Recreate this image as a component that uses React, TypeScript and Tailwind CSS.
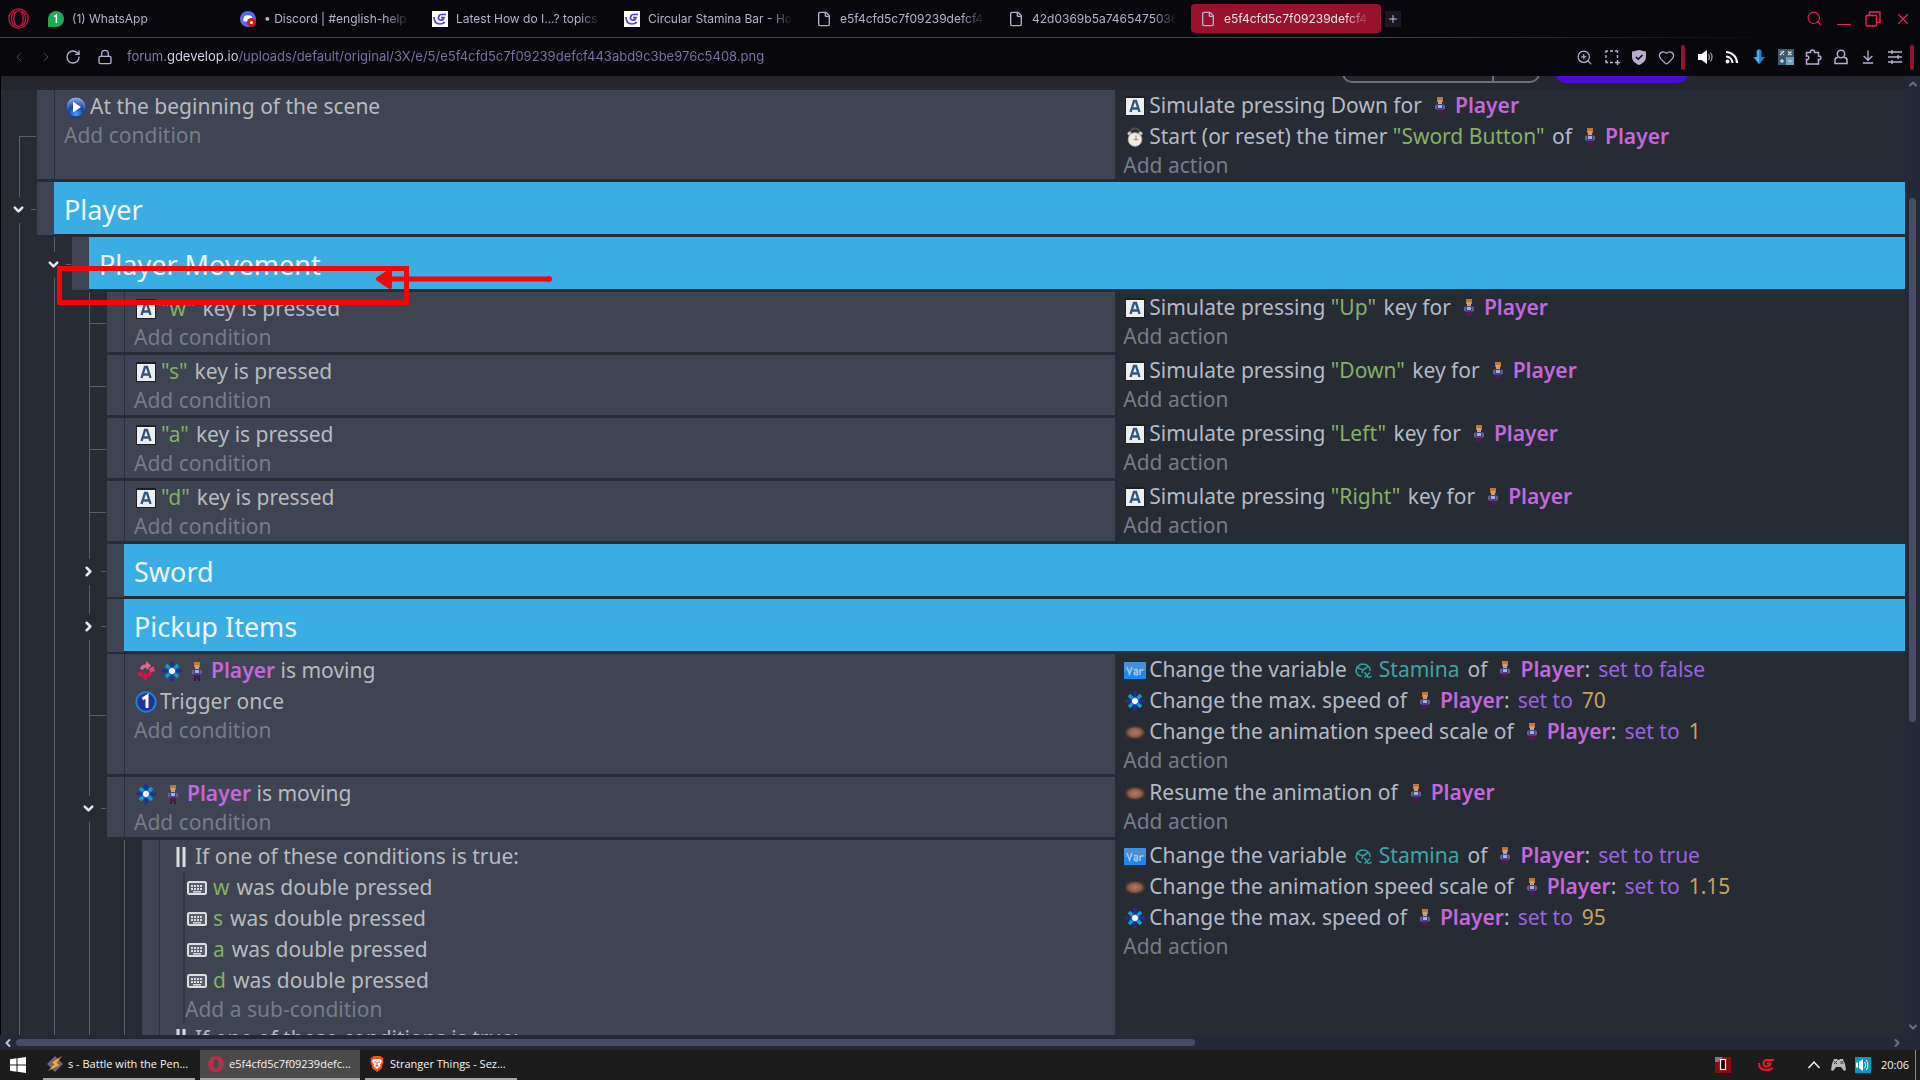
import type { ReactNode } from 'react';
import clsx from 'clsx';
import {
  ArrowDownToLine,
  ChevronDown,
  ChevronLeft,
  ChevronRight,
  ChevronUp,
  File,
  Heart,
  Lock,
  Plus,
  RotateCw,
  Search,
  X,
  ZoomIn,
} from 'lucide-react';

/* ---------- Icons ---------- */

function OperaIcon({ size, color }: { size: number; color: string }) {
  return (
    <svg width={size} height={size} viewBox="0 0 24 24" fill="none" stroke={color} strokeWidth="1.6">
      <circle cx="12" cy="12" r="11" />
      <ellipse cx="12" cy="12" rx="5.5" ry="9" />
      <path d="M8 3.5a11 11 0 0 0 0 17M16 3.5a11 11 0 0 1 0 17" />
    </svg>
  );
}

function WhatsAppIcon() {
  return (
    <svg width="16" height="16" viewBox="0 0 16 16">
      <path d="M0 16V8a8 8 0 1 1 8 8z" fill="#1fa855" />
      <path d="M6 5.6 8.4 4v8" fill="none" stroke="#fff" strokeWidth="1.5" />
    </svg>
  );
}

function DiscordIcon() {
  return (
    <svg width="16" height="16" viewBox="0 0 16 16">
      <circle cx="8" cy="8" r="8" fill="#5865f2" />
      <path d="M4.500 5C6 4 10 4 11.500 5c1 2 1.500 4 1 5.500H3.500C3 9 3.500 7 4.500 5z" fill="#fff" />
      <circle cx="11.500" cy="11.500" r="4.500" fill="#e01010" />
      <circle cx="11.500" cy="11.500" r="1.500" fill="#fff" />
    </svg>
  );
}

function GDevelopIcon() {
  return (
    <svg width="16" height="16" viewBox="0 0 16 16">
      <rect width="16" height="16" fill="#fff" />
      <path
        d="M14 3.500H9.500C6.500 3.500 5 8.500 8 9c2 .2 3.500-.5 4-2.500H9M2 6c0 4.500 2.500 7 6 7 2 0 3.500-.5 4.800-1.800"
        fill="none"
        stroke="#5a35e0"
        strokeWidth="1.700"
      />
    </svg>
  );
}

function FileIcon() {
  return <File size={16} strokeWidth={2} className="text-[#b9b0d0]" />;
}

function CropIcon() {
  return (
    <svg width="16" height="16" viewBox="0 0 16 16" fill="none" stroke="currentColor" strokeWidth="1.400">
      <path d="M2 4V2h2M6 2h3M11 2h2.500v2M2 6v3M2 11v2.500h2M6 13.500h3M13.500 6v3M13.500 11v5M11 13.500h5" />
    </svg>
  );
}

function ShieldIcon() {
  return (
    <svg width="16" height="16" viewBox="0 0 16 16">
      <path d="M1 2.500C4 2.500 6 1 8 1s4 1.500 7 1.500V8c0 4-3.500 6.500-7 8-3.500-1.500-7-4-7-8z" fill="#b9aed0" />
      <path d="m5 8 2.200 2.200L11.500 6" fill="none" stroke="#08070c" strokeWidth="1.600" />
    </svg>
  );
}

function SpeakerIcon() {
  return (
    <svg width="16" height="16" viewBox="0 0 16 16">
      <path d="M1 5h3.500L10 1v14l-5.500-4H1z" fill="#fff" />
      <path d="M11.500 5c1.200 2 1.200 4 0 6M13.500 3.500c2 3 2 6 0 9" fill="none" stroke="#999" strokeWidth="1.300" />
    </svg>
  );
}

function RssIcon() {
  return (
    <svg width="16" height="16" viewBox="0 0 16 16" fill="none" stroke="#fff" strokeWidth="2">
      <circle cx="3.500" cy="12.500" r="1" fill="#fff" />
      <path d="M2 7.500a6.500 6.500 0 0 1 6.500 6.500M2 3a11 11 0 0 1 11 11" />
    </svg>
  );
}

function BlueArrowIcon() {
  return (
    <svg width="16" height="16" viewBox="0 0 16 16">
      <path d="M5.500 1.500 8 0l2.500 1.500V8H14l-6 7.500L2 8h3.500z" fill="#1f7fd0" />
      <path d="M8 1v13L3.500 8.500H6.500V2z" fill="#55b4f5" />
    </svg>
  );
}

function CalculatorIcon() {
  return (
    <svg width="16" height="16" viewBox="0 0 16 16">
      <rect width="16" height="16" fill="#3d5a70" />
      <rect x="8" y="8" width="8" height="8" fill="#6fa0c0" />
      <path
        d="m2 6 4-4M2.500 2.500h1M5 5.500h1M10 2.500l3.500 3.500M13.500 2.500 10 6M2 12h4M4 10v4M10.500 12h3"
        stroke="#e8f0f8"
        strokeWidth="1.100"
      />
    </svg>
  );
}

function PuzzleIcon() {
  return (
    <svg width="17" height="16" viewBox="0 0 17 16" fill="none" stroke="currentColor" strokeWidth="1.500">
      <path d="M1.500 3.500h4c-.8-3.300 4.800-3.300 4 0h4v3.500c3.300-.8 3.300 4.300 0 3.500V15h-12v-4.500c3 .8 3-4.300 0-3.500z" />
    </svg>
  );
}

function PersonIcon() {
  return (
    <svg width="16" height="16" viewBox="0 0 16 16" fill="none" stroke="currentColor" strokeWidth="1.500">
      <circle cx="8" cy="5" r="3.700" />
      <path d="M5 8.500c-2 0-3 1-3 2.500v3.500h12V11c0-1.500-1-2.500-3-2.500" />
    </svg>
  );
}

function SlidersIcon() {
  return (
    <svg width="16" height="16" viewBox="0 0 16 16" fill="none" stroke="currentColor" strokeWidth="1.400">
      <path d="M1 3h14M1 8h14M1 13h14M5 1v4M11 6v4M5 11v4" />
    </svg>
  );
}

function RestoreIcon() {
  return (
    <svg width="16" height="16" viewBox="0 0 16 16" fill="none" stroke="currentColor" strokeWidth="1.400">
      <rect x="1" y="4.500" width="10.500" height="10.500" rx="1" />
      <path d="M4.500 4V1H15v10.500h-3" />
    </svg>
  );
}

function KeyIcon() {
  return (
    <svg width="20" height="20" viewBox="0 0 20 20">
      <rect width="20" height="20" fill="#1c2026" />
      <rect x="1" y="2" width="18" height="17" fill="#eceef0" />
      <path d="M5.500 16 9 5h2l3.500 11M7 12.500h6" fill="none" stroke="#34557a" strokeWidth="2.400" />
    </svg>
  );
}

function PlayIcon() {
  return (
    <svg width="22" height="22" viewBox="0 0 22 22">
      <defs>
        <radialGradient id="sphere" cx="0.500" cy="0.850" r="0.800">
          <stop offset="0" stopColor="#4aa0ff" />
          <stop offset="0.500" stopColor="#1440a4" />
          <stop offset="1" stopColor="#8fb0e0" />
        </radialGradient>
      </defs>
      <circle cx="11" cy="11" r="10" fill="url(#sphere)" stroke="#20407c" />
      <path d="M8 5.500 16 11l-8 5.500z" fill="#fff" />
    </svg>
  );
}

function TimerIcon() {
  return (
    <svg width="20" height="20" viewBox="0 0 20 20">
      <path d="M5.500 5.500C6 0 14 0 14.500 5.500" fill="none" stroke="#4c4c50" strokeWidth="2" />
      <circle cx="4.500" cy="6.500" r="2" fill="#c8c2bc" />
      <circle cx="15.500" cy="6.500" r="2" fill="#c8c2bc" />
      <circle cx="10" cy="12.500" r="6.800" fill="#f2ece6" stroke="#b5aca4" />
      <path d="M11 8.500v5M8.500 12.500h5" fill="none" stroke="#c08878" strokeWidth="1.200" />
    </svg>
  );
}

function TopDownIcon() {
  return (
    <svg width="20" height="20" viewBox="0 0 20 20">
      <path d="m4 4 4 4M16 4l-4 4M4 16l4-4M16 16l-4-4" stroke="#0ba0d8" strokeWidth="3.600" />
      <path d="M10 0v6M10 14v6M0 10h6M14 10h6" stroke="#1c2f9e" strokeWidth="3" />
      <circle cx="10" cy="10" r="4.300" fill="#1668c8" />
      <circle cx="10" cy="10" r="3" fill="#fff" />
    </svg>
  );
}

function InvertIcon() {
  return (
    <svg width="20" height="20" viewBox="0 0 20 20">
      <path d="M4 8C4.500 4.500 7 3 10 3.500V0l5 4.500-4.500 5V7C8.500 6.500 7.500 7.500 7 9z" fill="#f0608c" />
      <path d="M16.500 11c-.5 4-3 5.500-6 5.500V20L5 15.500l5-5V13c2 0 2.500-.5 3-2.500z" fill="#d8104c" />
      <path d="M1.500 11.500 7 10.500l-1 5-4-.5z" fill="#d8104c" />
      <path d="m13 7.500 4.500-2.500L19 10l-5 1.500z" fill="#e84070" />
    </svg>
  );
}

function OnceIcon() {
  return (
    <svg width="22" height="22" viewBox="0 0 22 22">
      <circle cx="11" cy="11" r="9.700" fill="#25309a" stroke="#1c86c8" strokeWidth="2" />
      <path d="M7.500 8 12 5v12" fill="none" stroke="#fff" strokeWidth="3" />
    </svg>
  );
}

function SpriteIcon() {
  return (
    <svg width="20" height="20" viewBox="0 0 20 20">
      <defs>
        <radialGradient id="knuckles">
          <stop offset="0" stopColor="#b37a60" />
          <stop offset="0.600" stopColor="#94604a" />
          <stop offset="1" stopColor="#3c2c28" />
        </radialGradient>
      </defs>
      <rect y="4" width="20" height="13" rx="4" fill="url(#knuckles)" />
    </svg>
  );
}

function VarIcon() {
  return (
    <svg width="22" height="18" viewBox="0 0 22 18">
      <rect y="1" width="22" height="17" rx="1" fill="#1e88f0" />
      <rect y="1" width="22" height="9" rx="1" fill="#4590d8" />
      <path
        d="m3 6 2.500 7L8 6M10 9c2-1 3.500-.5 3.500 1v3.500c-2 .5-3.500 0-3.500-1.200s1.500-1.300 3.500-1.200M16 14V8.500M16 10.500c.7-1.500 2-2 3.500-1.500"
        fill="none"
        stroke="#a0ccf6"
        strokeWidth="1.500"
      />
    </svg>
  );
}

function ObjectVariableIcon() {
  return (
    <svg width="18" height="18" viewBox="0 0 18 18" fill="none" stroke="#2f9f9c" strokeWidth="1.600">
      <path d="M6.500 15.500 3 14 1 10.500 2 6l4-3 5 .5 3.500 3L15 10M2.500 6.500 8 9l5-3.500M8 9l-1 3" />
      <path d="M9 12c2.500-1 2.500 4 4.500 4.500 1 0 2-.5 3-1.500M9.500 16.500 15 11.500" />
    </svg>
  );
}

function PlayerIcon() {
  return (
    <svg width="12" height="22" viewBox="0 0 12 22">
      <path d="M3 2h6v5H3z" fill="#c07830" />
      <path d="M4 5h4v4H4z" fill="#d09c80" />
      <path d="M2 9h8v6H2z" fill="#42428a" />
      <path d="M4 10h4v3H4z" fill="#a4b0dc" />
      <path d="M1 10h2v4H1zM9 10h2v4H9z" fill="#6c5e84" />
      <path d="M3 15h6v4H3z" fill="#4c1c50" />
      <path d="M3 19h2v2H3zM7 19h2v2H7z" fill="#3b1c38" />
    </svg>
  );
}

function KeyboardIcon() {
  return (
    <svg width="20" height="16" viewBox="0 0 20 16">
      <rect x="1" y="2" width="18" height="12" rx="1.500" fill="#5a5e69" stroke="#dcdde0" strokeWidth="2" />
      <path d="M4 6h12M4 9h12" stroke="#dcdde0" strokeWidth="1.800" strokeDasharray="2 1" />
      <path d="M6 11.800h8" stroke="#dcdde0" strokeWidth="1.500" />
    </svg>
  );
}

function OrIcon() {
  return (
    <svg width="10" height="20" viewBox="0 0 10 20">
      <path d="M2 0v20M8 0v20" stroke="#dcdde0" strokeWidth="3" />
    </svg>
  );
}

const icons = {
  key: <KeyIcon />,
  play: <PlayIcon />,
  timer: <TimerIcon />,
  topdown: <TopDownIcon />,
  invert: <InvertIcon />,
  once: <OnceIcon />,
  sprite: <SpriteIcon />,
  variable: <VarIcon />,
};

/* ---------- Browser chrome ---------- */

const tabs = [
  { title: '(1) WhatsApp', icon: <WhatsAppIcon /> },
  { title: '• Discord | #english-help', icon: <DiscordIcon /> },
  { title: 'Latest How do I...? topics', icon: <GDevelopIcon /> },
  { title: 'Circular Stamina Bar - How do I', icon: <GDevelopIcon /> },
  { title: 'e5f4cfd5c7f09239defcf443abd9', icon: <FileIcon /> },
  { title: '42d0369b5a7465475036fe01', icon: <FileIcon /> },
  { title: 'e5f4cfd5c7f09239defcf443abd9', icon: <FileIcon />, active: true },
];

function TabBar() {
  return (
    <div className="flex h-[37px] items-center pl-2 pr-2">
      <button aria-label="Menu" className="mr-[10px]">
        <OperaIcon size={21} color="#c8143c" />
      </button>
      <div className="flex gap-[2px]" role="tablist">
        {tabs.map((tab, index) => (
          <button
            key={index}
            role="tab"
            aria-selected={!!tab.active}
            className={clsx(
              'flex h-[29px] w-[190px] items-center gap-2 rounded-sm pl-[9px] pr-3 text-xs',
              tab.active ? 'bg-[#98122e] text-[#eee0e8]' : 'text-[#b9b0cc]',
            )}
          >
            <span className="shrink-0">{tab.icon}</span>
            <span className="min-w-0 flex-1 overflow-hidden whitespace-nowrap text-left [mask-image:linear-gradient(to_right,black_84%,transparent)]">
              {tab.title}
            </span>
          </button>
        ))}
      </div>
      <button aria-label="New tab" className="ml-1 flex h-4 w-4 items-center justify-center bg-[#1a1624] text-[#c8c0d8]">
        <Plus size={12} />
      </button>
      <div className="ml-auto flex items-center gap-[13px] text-[#f0214e]">
        <button aria-label="Search tabs">
          <Search size={17} strokeWidth={1.5} />
        </button>
        <button aria-label="Minimize" className="h-4 w-4 px-px pt-3">
          <span className="block h-px bg-[#f0214e]" />
        </button>
        <button aria-label="Restore">
          <RestoreIcon />
        </button>
        <button aria-label="Close">
          <X size={18} strokeWidth={1.5} />
        </button>
      </div>
    </div>
  );
}

function AddressBar() {
  return (
    <div className="flex h-[38px] items-center pl-[11px] pr-[6px] text-[#b9aed0]">
      <div className="flex items-center gap-[11px]">
        <button aria-label="Back" className="text-[#4a4656]">
          <ChevronLeft size={16} strokeWidth={1.5} />
        </button>
        <button aria-label="Forward" className="text-[#4a4656]">
          <ChevronRight size={16} strokeWidth={1.5} />
        </button>
        <button aria-label="Reload">
          <RotateCw size={16} />
        </button>
      </div>
      <Lock size={16} className="ml-4 mr-[14px]" />
      <input
        aria-label="Address"
        className="min-w-0 flex-1 bg-[linear-gradient(to_right,#8a7db0_40px,#e0d8f0_40px,#e0d8f0_111px,#7f73a6_111px)] bg-clip-text text-[13px] text-transparent outline-none"
        defaultValue="forum.gdevelop.io/uploads/default/original/3X/e/5/e5f4cfd5c7f09239defcf443abd9c3be976c5408.png"
      />
      <div className="flex items-center gap-[11px]">
        <button aria-label="Zoom">
          <ZoomIn size={17} strokeWidth={1.75} />
        </button>
        <button aria-label="Snapshot">
          <CropIcon />
        </button>
        <button aria-label="Ad blocker">
          <ShieldIcon />
        </button>
        <button aria-label="Bookmark">
          <Heart size={17} strokeWidth={1.75} />
        </button>
      </div>
      <div className="ml-[6px] mr-3 h-[25px] w-1 rounded-sm bg-[#98122e]" />
      <div className="flex items-center gap-[11px]">
        <button aria-label="Volume">
          <SpeakerIcon />
        </button>
        <button aria-label="Feeds">
          <RssIcon />
        </button>
        <button aria-label="Downloader">
          <BlueArrowIcon />
        </button>
        <button aria-label="Calculator">
          <CalculatorIcon />
        </button>
        <button aria-label="Extensions">
          <PuzzleIcon />
        </button>
        <button aria-label="Profile">
          <PersonIcon />
        </button>
        <button aria-label="Downloads">
          <ArrowDownToLine size={16} />
        </button>
        <button aria-label="Easy setup">
          <SlidersIcon />
        </button>
      </div>
      <div className="ml-[7px] h-[25px] w-1 rounded-sm bg-[#98122e]" />
    </div>
  );
}

/* ---------- Event sheet ---------- */

type IconName = keyof typeof icons;

const Str = ({ children }: { children: ReactNode }) => <span className="mr-[2px] text-[#85b068]">{children}</span>;
const Num = ({ children }: { children: ReactNode }) => <span className="ml-[9px] text-[#c9a25f]">{children}</span>;
const Op = ({ children }: { children: ReactNode }) => <span className="ml-2 text-[#9a63e0]">{children}</span>;

function Player({ colon, first }: { colon?: boolean; first?: boolean }) {
  return (
    <>
      <span className={clsx(first ? 'ml-[7px] mr-2' : 'ml-3 mr-[9px]')}>
        <PlayerIcon />
      </span>
      <span className="font-semibold text-[#c268da]">Player</span>
      {colon && <span>:</span>}
    </>
  );
}

function Stamina() {
  return (
    <span className="mx-2 flex items-center gap-[6px] text-[#3fa5a5]">
      <ObjectVariableIcon />
      Stamina
    </span>
  );
}

function Line({ icon, children }: { icon: IconName; children: ReactNode }) {
  return (
    <div className="flex h-[31px] items-center whitespace-pre">
      <span className="flex w-[26px] shrink-0 items-center justify-center pr-[3px]">{icons[icon]}</span>
      {children}
    </div>
  );
}

function AddButton({ children }: { children: ReactNode }) {
  return <button className="flex h-[27px] items-center text-[#777c87]">{children}</button>;
}

type Gutter = 'start' | 'pass' | 'tick' | 'open' | 'closed';

function GutterCell({ kind }: { kind: Gutter }) {
  if (kind === 'open' || kind === 'closed') {
    return (
      <div className="flex w-[35px] shrink-0 flex-col">
        <div className="ml-[17px] flex-1 border-l border-[#5a5f69]" />
        <div className="flex h-[26px] items-center justify-between pl-[9px]">
          <button aria-label={kind === 'open' ? 'Fold' : 'Unfold'} className="text-[#e6e8ec]">
            {kind === 'open' ? <ChevronDown size={15} strokeWidth={4} /> : <ChevronRight size={15} strokeWidth={4} />}
          </button>
          <div className="mr-px h-px w-[5px] bg-[#5a5f69]" />
        </div>
        <div className="ml-[17px] flex-1 border-l border-[#5a5f69]" />
      </div>
    );
  }
  if (kind === 'pass') {
    return (
      <div className="flex w-[35px] shrink-0">
        <div className="ml-[17px] border-l border-[#5a5f69]" />
      </div>
    );
  }
  return (
    <div className="flex w-[35px] shrink-0 flex-col pl-[17px] pr-px">
      <div className={clsx('flex-1 border-b border-[#5a5f69]', kind === 'tick' && 'border-l')} />
      <div className="flex-1 border-l border-[#5a5f69]" />
    </div>
  );
}

function Row({ gutter, left, actions }: { gutter: Gutter[]; left: ReactNode; actions: ReactNode }) {
  return (
    <div className="flex">
      <div className="flex w-[58.5%] shrink-0">
        {gutter.map((kind, index) => (
          <GutterCell key={index} kind={kind} />
        ))}
        <div className="mb-[3px] w-[18px] shrink-0 border-r border-[#2b2f38] bg-[#3e4452]" />
        <div className="mb-[3px] flex-1 bg-[#3e4452] pl-[9px] pt-px text-[#b8babf]">{left}</div>
      </div>
      <div className="mb-[3px] min-h-[60px] min-w-0 flex-1 pl-2 text-[#b3bac6]">{actions}</div>
    </div>
  );
}

function Group({ gutter, title }: { gutter: Gutter[]; title: string }) {
  return (
    <div className="flex">
      {gutter.map((kind, index) => (
        <GutterCell key={index} kind={kind} />
      ))}
      <div className="mb-[2px] w-[17px] shrink-0 bg-[#3e4452]" />
      <h2 className="mb-[3px] flex h-[52px] min-w-0 flex-1 items-center bg-[#3aaee4] pl-[10px] pt-[2px] text-[27px] text-[#eef6fb]">
        {title}
      </h2>
    </div>
  );
}

const movement = [
  { key: '"w"', direction: '"Up"' },
  { key: '"s"', direction: '"Down"' },
  { key: '"a"', direction: '"Left"' },
  { key: '"d"', direction: '"Right"' },
];

function OrCondition() {
  return (
    <>
      <div className="flex h-[31px] items-center gap-[9px] pl-[7px]">
        <OrIcon />
        If one of these conditions is true:
      </div>
      <div className="ml-[14px] border-l-2 border-[#31353f]">
        {['w', 's', 'a', 'd'].map((letter) => (
          <div key={letter} className="flex h-[31px] items-center pl-[2px]">
            <KeyboardIcon />
            <span className="ml-[6px] mr-[7px] text-[#85b068]">{letter}</span>
            was double pressed
          </div>
        ))}
        <AddButton>Add a sub-condition</AddButton>
      </div>
    </>
  );
}

function EventSheet() {
  return (
    <div className="text-[21px] leading-none">
      <Row
        gutter={['start']}
        left={
          <>
            <Line icon="play">At the beginning of the scene</Line>
            <AddButton>Add condition</AddButton>
          </>
        }
        actions={
          <>
            <Line icon="key">
              Simulate pressing Down for
              <Player />
            </Line>
            <Line icon="timer">
              Start (or reset) the timer <Str>"Sword Button"</Str> of
              <Player />
            </Line>
            <AddButton>Add action</AddButton>
          </>
        }
      />
      <Group gutter={['open']} title="Player" />
      <Group gutter={['pass', 'open']} title="Player Movement" />
      {movement.map((item) => (
        <Row
          key={item.key}
          gutter={['pass', 'pass', 'tick']}
          left={
            <>
              <Line icon="key">
                <span className="ml-px mr-[7px] text-[#85b068]">{item.key}</span>key is pressed
              </Line>
              <AddButton>Add condition</AddButton>
            </>
          }
          actions={
            <>
              <Line icon="key">
                Simulate pressing <Str>{item.direction}</Str> key for
                <Player />
              </Line>
              <AddButton>Add action</AddButton>
            </>
          }
        />
      ))}
      <Group gutter={['pass', 'pass', 'closed']} title="Sword" />
      <Group gutter={['pass', 'pass', 'closed']} title="Pickup Items" />
      <Row
        gutter={['pass', 'pass', 'tick']}
        left={
          <>
            <Line icon="invert">
              <span className="ml-[2px] mr-[2px]">
                <TopDownIcon />
              </span>
              <Player first /> is moving
            </Line>
            <Line icon="once">Trigger once</Line>
            <AddButton>Add condition</AddButton>
          </>
        }
        actions={
          <>
            <Line icon="variable">
              Change the variable
              <Stamina />
              of
              <Player colon />
              <Op>set to false</Op>
            </Line>
            <Line icon="topdown">
              Change the max. speed of
              <Player colon />
              <Op>set to</Op>
              <Num>70</Num>
            </Line>
            <Line icon="sprite">
              Change the animation speed scale of
              <Player colon />
              <Op>set to</Op>
              <Num>1</Num>
            </Line>
            <AddButton>Add action</AddButton>
          </>
        }
      />
      <Row
        gutter={['pass', 'pass', 'open']}
        left={
          <>
            <Line icon="topdown">
              <Player first /> is moving
            </Line>
            <AddButton>Add condition</AddButton>
          </>
        }
        actions={
          <>
            <Line icon="sprite">
              Resume the animation of
              <Player />
            </Line>
            <AddButton>Add action</AddButton>
          </>
        }
      />
      <Row
        gutter={['pass', 'pass', 'pass', 'pass']}
        left={
          <>
            <OrCondition />
            <OrCondition />
          </>
        }
        actions={
          <>
            <Line icon="variable">
              Change the variable
              <Stamina />
              of
              <Player colon />
              <Op>set to true</Op>
            </Line>
            <Line icon="sprite">
              Change the animation speed scale of
              <Player colon />
              <Op>set to</Op>
              <Num>1.15</Num>
            </Line>
            <Line icon="topdown">
              Change the max. speed of
              <Player colon />
              <Op>set to</Op>
              <Num>95</Num>
            </Line>
            <AddButton>Add action</AddButton>
          </>
        }
      />
    </div>
  );
}

/* Red box and arrow drawn over the sheet */
function Annotation() {
  return (
    <div className="pointer-events-none absolute left-14 top-[190px]">
      <div className="h-[39px] w-[352px] border-[5px] border-[#fb0207]" />
      <svg width="178" height="24" viewBox="0 0 178 24" className="absolute left-[318px] top-[1px]">
        <path d="M6 12h168" stroke="#fb0207" strokeWidth="5" />
        <circle cx="174" cy="12" r="3" fill="#fb0207" />
        <path d="M15 4 3 12l12 8z" fill="#fb0207" stroke="#fb0207" strokeWidth="4" strokeLinejoin="round" />
      </svg>
    </div>
  );
}

function Viewport() {
  return (
    <div className="flex min-h-0 flex-1 flex-col">
      <div className="flex min-h-0 flex-1">
        <div className="relative min-w-0 flex-1 overflow-hidden border-l border-black bg-[#272b34] font-['Noto_Sans',sans-serif]">
          <div className="flex h-[14px] items-end justify-end gap-[15px] overflow-hidden bg-[#25262e] pb-[7px] pr-[217px]">
            <div className="flex h-8 w-[198px] shrink-0 rounded-[10px] border-2 border-[#6f6d80]">
              <button aria-label="Preview" className="flex-1 border-r-2 border-[#6f6d80]" />
              <button aria-label="Preview options" className="w-11" />
            </div>
            <button aria-label="Share" className="h-8 w-[133px] shrink-0 rounded-[10px] bg-[#4a0cd2]" />
          </div>
          <div className="pl-px">
            <EventSheet />
          </div>
          <Annotation />
        </div>
        <div className="flex w-[15px] flex-col items-center bg-[#252937] text-[#6c6f7c]">
          <ChevronUp size={12} strokeWidth={4} className="mt-[2px]" />
          <div className="mt-[108px] h-[524px] w-[7px] rounded-full bg-[#4a4c66]" />
          <ChevronDown size={12} strokeWidth={4} className="mb-[2px] mt-auto" />
        </div>
      </div>
      <div className="flex h-[15px] items-center bg-[#252937] pl-[2px] pr-[17px]">
        <ChevronLeft size={12} strokeWidth={4} className="text-[#c4c4cc]" />
        <div className="ml-[2px] h-[7px] w-[62%] rounded-full bg-[#4a4c66]" />
        <ChevronRight size={12} strokeWidth={4} className="ml-auto text-[#6c6f7c]" />
      </div>
    </div>
  );
}

/* ---------- Taskbar ---------- */

function WinampIcon() {
  return (
    <svg width="16" height="16" viewBox="0 0 16 16">
      <path d="M8 0 16 8 8 16 0 8z" fill="#6a6a6e" />
      <path d="M15 0 5 6.500l2.500 1.800L1 15l11.500-6L9.500 7z" fill="#f5a640" />
    </svg>
  );
}

function BraveIcon() {
  return (
    <svg width="16" height="16" viewBox="0 0 16 16">
      <path d="M4.500 0h7L13 1.500l1.500.5-.5 2 .5 1.500-2 7L8 16l-4.500-3.500-2-7L2 4l-.5-2L3 1.500z" fill="#f4501e" />
      <path d="M4 3.500 8 3l4 .5 1 2-2 3 .5 1.500L8 13l-3.500-3 .5-1.500-2-3z" fill="#fff" />
      <path d="M5 6h2M9 6h2M8 6v3M6.500 10.500 8 9.500l1.500 1" stroke="#f4501e" strokeWidth="1.200" fill="none" />
    </svg>
  );
}

const apps = [
  { title: 's - Battle with the Pen...', icon: <WinampIcon />, width: 'w-[152px]' },
  { title: 'e5f4cfd5c7f09239defc...', icon: <OperaIcon size={16} color="#f0214e" />, width: 'w-[160px]', active: true },
  { title: 'Stranger Things - Sez...', icon: <BraveIcon />, width: 'w-[152px]' },
];

function Taskbar() {
  return (
    <div className="flex h-[30px] items-stretch bg-[#1c1c1c] font-['Open_Sans',sans-serif] text-[11px] text-[#f4f4f4]">
      <button aria-label="Start" className="flex w-[43px] items-center pl-[10px]">
        <svg width="16" height="16" viewBox="0 0 16 16" fill="#fff">
          <path d="M0 2.200 6.500 1.300V7.500H0zM7.500 1.200 16 0v7.500H7.500zM0 8.500h6.500v6.200L0 13.800zM7.500 8.500H16V16l-8.500-1.200z" />
        </svg>
      </button>
      <div className="flex gap-[5px]">
        {apps.map((app) => (
          <button
            key={app.title}
            className={clsx(
              'flex items-center whitespace-nowrap border-b-2 border-[#a8a6a6]',
              app.width,
              app.active ? 'gap-[5px] bg-[#4a4a4a] pl-2' : 'gap-[5px] pl-1',
            )}
          >
            {app.icon}
            <span>{app.title}</span>
          </button>
        ))}
      </div>
      <div className="ml-auto flex items-center pr-1">
        <button aria-label="Counter" className="mr-[27px]">
          <svg width="16" height="16" viewBox="0 0 16 16">
            <rect width="16" height="16" fill="#8c0a10" />
            <path d="M0 0h8L3 5H0z" fill="#9a7078" />
            <rect x="5.500" y="2.500" width="5" height="10" fill="#300" stroke="#fff" strokeWidth="1.200" />
          </svg>
        </button>
        <button aria-label="GX" className="mr-8">
          <svg width="16" height="16" viewBox="0 0 16 16" fill="none" stroke="#f01824" strokeWidth="2">
            <path d="M16 3H9C5 3 4 9 8 9.500c3 0 4-1 4.500-3H9M1 6c0 5 3 7 7 7 3 0 5-.5 6.500-2" />
          </svg>
        </button>
        <button aria-label="Hidden icons" className="mr-[9px]">
          <svg width="16" height="16" viewBox="0 0 16 16" fill="none" stroke="#f4f4f4" strokeWidth="1.500">
            <path d="m2.500 11 5.500-6 5.500 6" />
          </svg>
        </button>
        <button aria-label="Controller" className="mr-[9px]">
          <svg width="15" height="14" viewBox="0 0 15 14">
            <path d="M3 1h3l1 1h1l1-1h3l2 5 1 6-2 1-3-4H5l-3 4-2-1 1-6z" fill="#b8b8b8" />
            <path d="m3 3 3 3M6 3 3 6M9.500 3l3 3M12.500 3l-3 3" stroke="#3c3c3c" />
          </svg>
        </button>
        <button aria-label="Sound" className="mr-[10px]">
          <svg width="16" height="16" viewBox="0 0 16 16">
            <rect width="16" height="16" fill="#0c98bc" />
            <path d="M1 5.500h2v5H1zM4 5l4-3v12l-4-3z" fill="#fff" />
            <path d="M9.500 5c1.500 2 1.500 4 0 6M11 3c2.500 3 2.500 7 0 10" fill="none" stroke="#fff" />
          </svg>
        </button>
        <time className="mr-[6px]">20:06</time>
        <div className="h-[30px] w-px bg-[#8a8a8a]" />
      </div>
    </div>
  );
}

export default function App() {
  return (
    <div className="flex h-screen flex-col overflow-hidden bg-[#08070c] font-['Inter',sans-serif]">
      <TabBar />
      <div className="h-px bg-[linear-gradient(to_right,#a01432_72%,transparent_93%)]" />
      <AddressBar />
      <Viewport />
      <Taskbar />
    </div>
  );
}
